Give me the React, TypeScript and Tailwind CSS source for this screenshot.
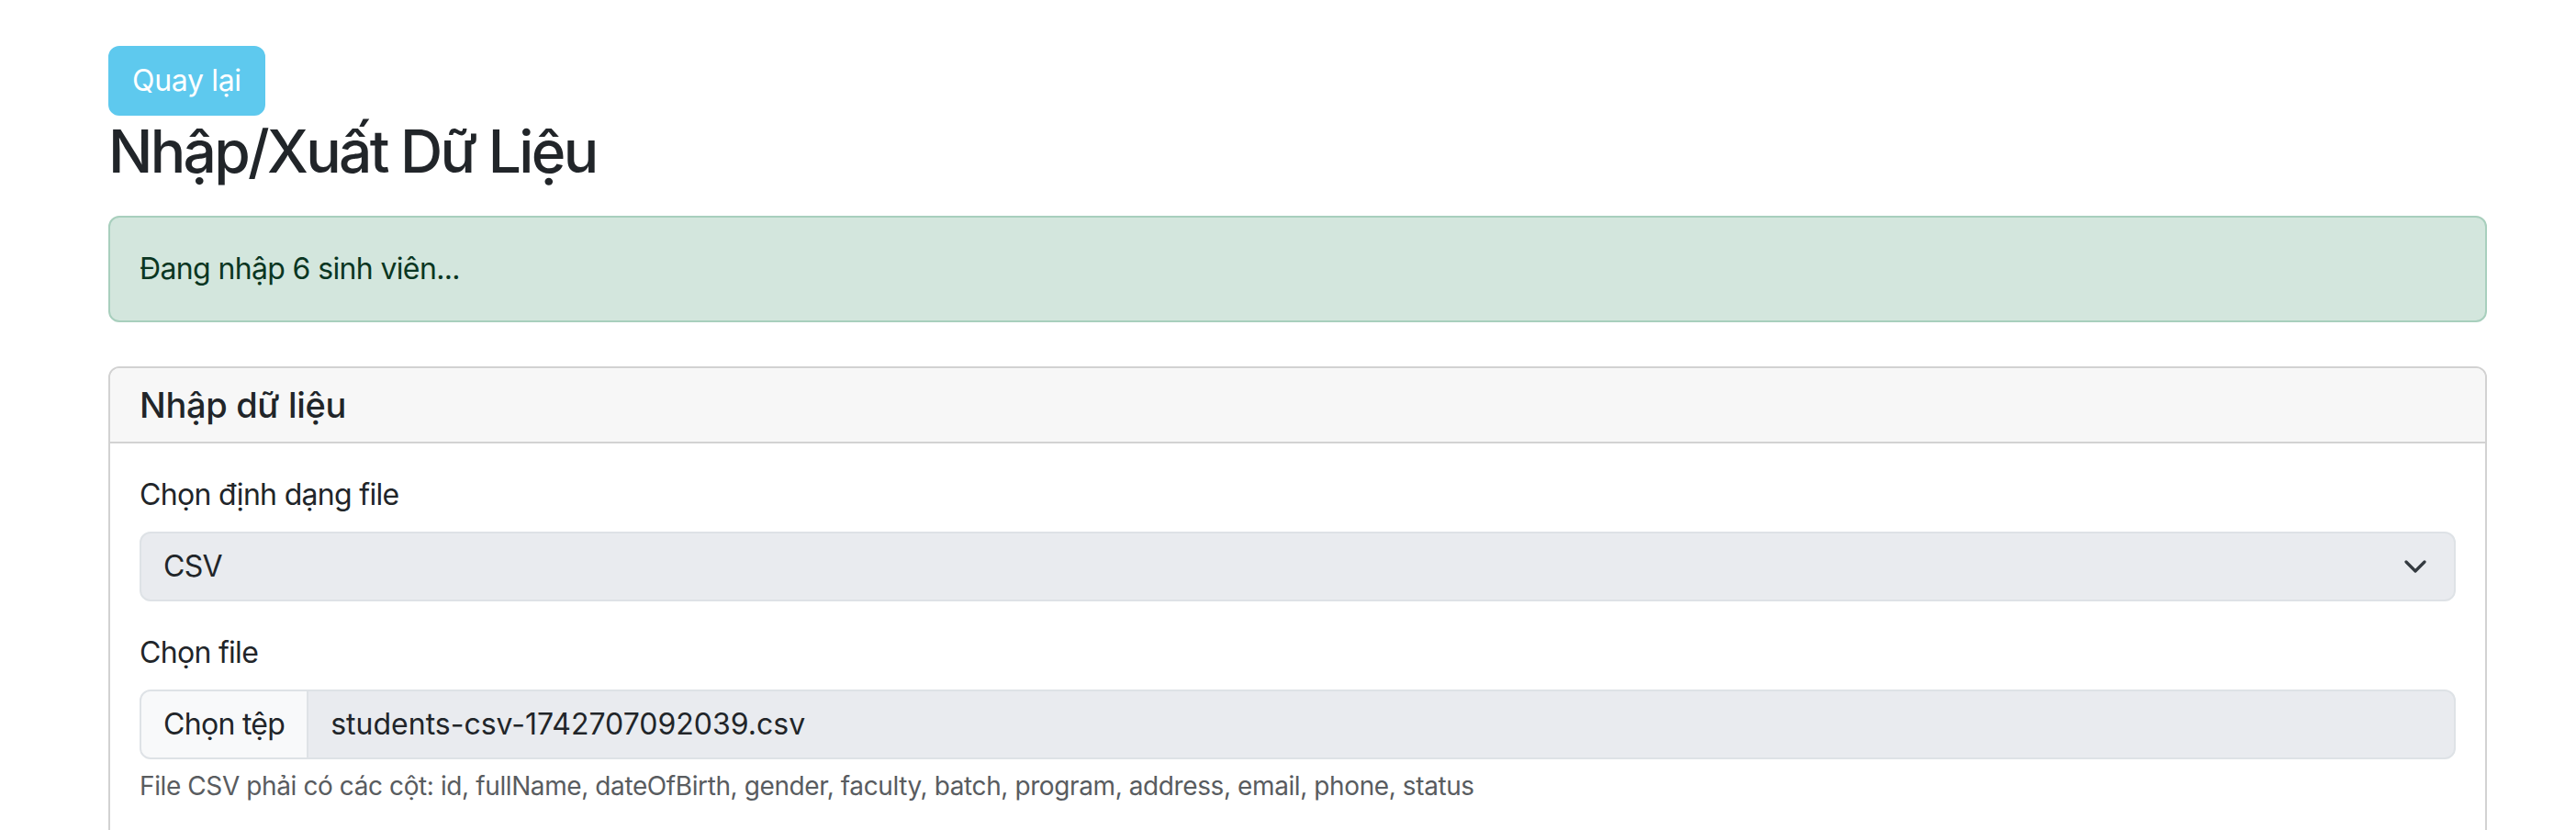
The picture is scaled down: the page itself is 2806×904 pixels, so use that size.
export default function App() {
  return (
    <div className="min-h-screen bg-white font-['Inter','Noto_Sans',sans-serif] text-[#212529] tracking-[-0.7px] pl-[118px] pr-[97px] pt-[50px]">
      <button className="h-[76px] px-[24px] rounded-[12px] bg-[#5ec9ee] text-white text-[32px] leading-[48px] tracking-[-0.32px] border-2 border-[#5ec9ee]">
        Quay lại
      </button>
      <h2 className="text-[64px] leading-[77px] font-medium tracking-[-0.042em] mb-[32px]">
        Nhập/Xuất Dữ Liệu
      </h2>

      <div className="bg-[#d3e6dd] border-2 border-[#a8cfbd] rounded-[12px] px-[32px] py-[32px] text-[#0a3622] text-[32px] leading-[48px] tracking-[-0.64px] mb-[48px]">
        Đang nhập 6 sinh viên...
      </div>

      <section className="border-2 border-[#d2d2d2] rounded-[12px] min-h-[600px]">
        <div className="bg-[#f7f7f7] border-b-2 border-[#d2d2d2] rounded-t-[10px] px-[32px] py-[16px]">
          <h5 className="text-[38px] leading-[48px] font-medium tracking-[-0.32px]">Nhập dữ liệu</h5>
        </div>

        <div className="p-[32px] text-[32px] leading-[48px]">
          <div className="mb-[32px]">
            <label className="block mb-[16px]">Chọn định dạng file</label>
            <div className="h-[76px] flex items-center justify-between bg-[#e9ebef] border-2 border-[#dee2e6] rounded-[12px] pl-[24px] pr-[30px]">
              <span>CSV</span>
              <svg width="24" height="15" viewBox="0 0 24 15" fill="none">
                <path d="M2 2l10 10 10-10" stroke="#343a40" strokeWidth="3.2" strokeLinecap="round" strokeLinejoin="round" />
              </svg>
            </div>
          </div>

          <div>
            <label className="block mb-[16px]">Chọn file</label>
            <div className="h-[76px] flex items-stretch bg-[#e9ebef] border-2 border-[#dee2e6] rounded-[12px] overflow-hidden">
              <span className="flex items-center px-[24px] bg-[#f8f9fa] border-r-2 border-[#dee2e6]">Chọn tệp</span>
              <span className="flex items-center pl-[24px] tracking-normal">students-csv-1742707092039.csv</span>
            </div>
            <p className="mt-[8px] text-[28px] leading-[42px] text-[#595c5f] tracking-[-0.4px]">
              File CSV phải có các cột: id, fullName, dateOfBirth, gender, faculty, batch, program, address, email, phone, status
            </p>
          </div>
        </div>
      </section>
    </div>
  );
}
